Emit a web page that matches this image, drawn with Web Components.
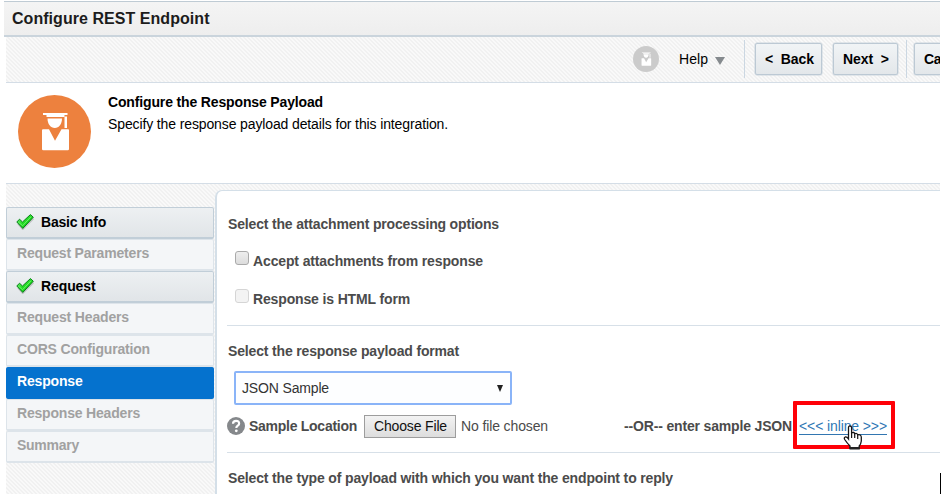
<!DOCTYPE html>
<html lang="en"><head><meta charset="utf-8"><title>Configure REST Endpoint</title>
<style>
body{margin:0;background:#fff;width:942px;height:496px;overflow:hidden;font:14px "Liberation Sans",Arial,sans-serif;color:#000}
</style></head><body>
<endpoint-wizard></endpoint-wizard>
<script>
const define=(name,html,init)=>customElements.define(name,class extends HTMLElement{
  connectedCallback(){
    if(this.shadowRoot)return;
    const t=document.createElement('template');t.innerHTML=html;
    this.attachShadow({mode:'open'}).append(t.content.cloneNode(true));
    if(init)init.call(this,this.shadowRoot);
  }
});
// A single line of text tracked out to the width given in its "w" attribute.
define('fit-text',`<style>:host{display:inline-block;flex:none;white-space:pre;line-height:16px}span{display:inline-block}</style><span><slot></slot></span>`,function(r){
  const s=r.querySelector('span'),w=+this.getAttribute('w');
  this.style.width=w+'px';
  s.style.letterSpacing=(w-s.getBoundingClientRect().width)/this.textContent.length+'px';
});
define('graduate-icon',`<style>:host{display:block;flex:none;width:73px;height:73px}svg{display:block;width:100%;height:100%}</style>
<svg viewBox="0 0 73 73"><circle cx="36.5" cy="36.5" r="36.5" fill="var(--disc,#ed813e)"/><g fill="#fff"><path d="M25 18H49.5V20H46.5V22H28.5V20H25Z"/><path d="M29.5 23.5H44C44 29 41 33 36.8 33S29.5 29 29.5 23.5Z"/><path d="M46.5 21.5H49V33H46.5Z"/><path d="M25 34.3H31L37 45.8 43.5 34.3H50.2Q51 34.3 51 35.3V54Q51 55.3 49.8 55.3H25.3Q24 55.3 24 54V35.3Q24 34.3 25 34.3Z"/></g></svg>`);
define('check-icon',`<style>:host{display:block;width:18px;height:16px}svg{display:block}</style>
<svg width="18" height="16" viewBox="0 0 18 16"><defs><linearGradient id="g" x2="1" y2="1"><stop stop-color="#7df57d"/><stop offset=".5" stop-color="#22dd22"/><stop offset="1" stop-color="#10c010"/></linearGradient></defs><path d="M2 9.8 6.7 15.4 17.5 4.6" fill="none" stroke="#999" opacity=".5" stroke-width="1.5"/><path d="M.8 8 3.5 5.2 6.5 8 14.4 .6 17.3 3.2 6.8 14.4Z" fill="url(#g)" stroke="#087d19" stroke-width="1" stroke-linejoin="round"/><path d="M2.3 8 6.6 11.7 15.2 2.6" fill="none" stroke="#7bf47b" stroke-width=".8"/></svg>`);
define('tool-button',`<style>:host{display:flex;box-sizing:border-box;height:32px;border:1px solid #bcc9d4;border-radius:2px;background:linear-gradient(#f1f4f6,#e3e7ea);box-shadow:0 0 0 .5px #cbd5de;align-items:center;padding-left:9px;font-weight:bold;flex:none}</style><slot></slot>`);
define('nav-step',`<style>:host{display:flex;box-sizing:border-box;height:32px;width:208px;border:1px solid #dde4ea;border-width:1px 1px 2px;border-radius:2px;background:#f4f6f8;color:#a1a1a1;font-weight:bold;padding:5px 0 0 10px}
:host([done]){background:linear-gradient(#edf0f2,#e1e5e8);border-color:#c1ced8;color:#000;padding-top:6px;padding-left:9px}
:host([current]){background:#0572ce;border-color:#0572ce;color:#fff}
check-icon{display:none;margin-right:7px}:host([done]) check-icon{display:block}</style><check-icon></check-icon><slot></slot>`);
define('check-option',`<style>:host{display:flex;height:18px;font-weight:bold;color:#4b4b4b}i{box-sizing:border-box;width:14px;height:14px;border:1px solid #aaa;border-radius:3px;background:linear-gradient(#eee,#dcdcdc);margin-right:4px}:host([disabled]) i{border-color:#d5d5d5;background:#f3f3f3}slot{display:block;padding-top:2px}</style><i></i><slot></slot>`);
define('hand-cursor',`<style>:host{display:block;width:20px;height:26px}</style><svg width="20" height="26" viewBox="0 0 20 26"><path d="M5.5 2.5Q5.5 1 7 1T8.6 2.5V8Q11 6.6 11.7 8.8 13.7 7.7 14.7 9.8 17.8 9 18.3 12V16Q18 19 16.2 21V23H7V21Q4 18 1.7 14.5 .7 12.7 2.3 12 3.9 11.7 5.5 14Z" fill="#fff" stroke="#151515" stroke-width="1.3"/><path d="M8.6 8V13M11.7 9V13M14.7 10V14" stroke="#151515" stroke-width="1.2"/><path d="M6.5 22H16.8V24.5H6.5Z" fill="#222"/></svg>`);
define('wizard-title',`<style>:host{display:block;box-sizing:border-box;height:36px;margin:1px 1px 0 4px;border-top:1px solid #bfcbd4;border-bottom:2px solid #cad4dc;background:linear-gradient(#f4f4f4,#eee);font-size:16px;font-weight:bold;color:#1c1c1c;padding:7px 0 0 8px}fit-text{line-height:20px}</style><fit-text w="197.5">Configure REST Endpoint</fit-text>`);
define('wizard-toolbar',`<style>:host{display:flex;box-sizing:border-box;height:46px;padding:6px 0 0 627px;align-items:flex-start;border-bottom:1px solid #d4dde6;overflow:hidden}
graduate-icon{width:26px;height:26px;margin:3px 20px 0 0;--disc:#cbcbcb}.help{margin-top:8px}.tri{flex:none;border:5.5px solid transparent;border-top:8px solid #858a8e;border-bottom:0;margin:14px 19px 0 7px}.sep{flex:none;width:1px;height:38px;background:#cbd7e2;margin-top:-3px}</style>
<graduate-icon></graduate-icon><fit-text class="help" w="29">Help</fit-text><span class="tri"></span><span class="sep"></span>
<tool-button style="width:67px;margin-left:10px"><fit-text w="49">&lt;  Back</fit-text></tool-button><tool-button style="width:65px;margin-left:11px"><fit-text w="46">Next  &gt;</fit-text></tool-button><span class="sep" style="margin-left:8px"></span><tool-button style="width:40px;margin-left:7px"><fit-text w="17">Ca</fit-text></tool-button>`);
define('wizard-banner',`<style>:host{display:flex;box-sizing:border-box;height:101px;background:#fff;border-bottom:1px solid #d4dde6;padding:12px 0 0 12px}div{display:grid;align-content:start;gap:6px;margin:-1px 0 0 17px}b{display:block;height:16px}</style><graduate-icon></graduate-icon><div><b><fit-text w="215">Configure the Response Payload</fit-text></b><fit-text w="340">Specify the response payload details for this integration.</fit-text></div>`);
define('step-list',`<style>:host{display:block;width:208px;padding-top:23px;flex:none}</style>
<nav-step done><fit-text w="65">Basic Info</fit-text></nav-step><nav-step><fit-text w="132">Request Parameters</fit-text></nav-step><nav-step done><fit-text w="54.5">Request</fit-text></nav-step><nav-step><fit-text w="112">Request Headers</fit-text></nav-step><nav-step><fit-text w="133">CORS Configuration</fit-text></nav-step><nav-step current><fit-text w="65.5">Response</fit-text></nav-step><nav-step><fit-text w="123">Response Headers</fit-text></nav-step><nav-step><fit-text w="62">Summary</fit-text></nav-step>`);
define('payload-panel',`<style>:host{display:block;box-sizing:border-box;flex:1;height:320px;margin-top:6px;border:1px solid #d4dfe8;border-right:0;border-width:1px 0 0 2px;border-radius:7px 0 0 0;background:#fff;color:#4b4b4b;padding:25px 0 0 11px;font-weight:bold;overflow:hidden}
fit-text{display:block}check-option{margin-left:7px}hr{border:0;height:1px;background:#d7e0e8;margin:0 0 0 -1px}
.select{display:flex;box-sizing:border-box;width:278px;height:34px;border:2px solid #8ab4f8;border-radius:2px;margin:12px 0 0 6px;padding:7px 7px 0 6px;background:#fdfeff;justify-content:space-between;font-weight:normal;color:#333}.tri{border:3.5px solid transparent;border-top:7px solid #222;border-bottom:0;margin-top:5px}
.row{display:flex;height:24px;margin:9px 0 0 -1px;align-items:center}.q{width:18px;height:18px;margin:-1px 4px 0 0}.file{box-sizing:border-box;height:23px;width:92px;border:1px solid #9d9d9d;background:linear-gradient(#f3f3f3,#ddd);color:#111;font-weight:normal;margin:0 5px 0 7px;padding:2px 0 0 9px}.n{font-weight:normal}.or{margin-left:76px}
.link{position:relative;font-weight:normal;color:#2f78b5;margin:1px 0 0 7px}.link fit-text{height:16px;border-bottom:1px solid #3276b1;line-height:17px}.mark{position:absolute;left:-6px;top:-17px;box-sizing:border-box;width:102px;height:48px;border:4px solid #ff0007;border-radius:1px}hand-cursor{position:absolute;left:44px;top:7px}</style>
<fit-text w="271">Select the attachment processing options</fit-text>
<check-option style="margin-top:19px"><fit-text w="230">Accept attachments from response</fit-text></check-option>
<check-option disabled style="margin-top:20px"><fit-text w="157">Response is HTML form</fit-text></check-option>
<hr style="margin-top:18px"><fit-text style="margin-top:17px" w="231">Select the response payload format</fit-text>
<div class="select"><fit-text w="87">JSON Sample</fit-text><span class="tri"></span></div>
<div class="row"><svg class="q" viewBox="0 0 18 18"><circle cx="9" cy="9" r="9" fill="#85888b"/><path d="M6 6.8Q6 3.8 9.1 3.8T12.1 6.7C12.1 8.7 9.3 8.8 9.3 11" fill="none" stroke="#fff" stroke-width="2.2"/><circle cx="9.3" cy="13.8" r="1.4" fill="#fff"/></svg><fit-text w="108">Sample Location</fit-text><span class="file"><fit-text w="73">Choose File</fit-text></span><fit-text class="n" w="87">No file chosen</fit-text><fit-text class="or" w="168">--OR-- enter sample JSON</fit-text><div class="link"><fit-text w="88">&lt;&lt;&lt; inline &gt;&gt;&gt;</fit-text><span class="mark"></span><hand-cursor></hand-cursor></div></div>
<hr style="margin-top:14px"><fit-text style="margin-top:17px" w="445">Select the type of payload with which you want the endpoint to reply</fit-text>`);
define('endpoint-wizard',`<style>:host{display:block;position:relative;width:941px;height:494px;overflow:hidden}
.page{margin:0 1px 0 6px;height:457px;overflow:hidden;background:repeating-linear-gradient(45deg,#f9f9f9 0 1.414px,#f1f1f1 1.414px 2.828px)}.content{display:flex;gap:1px;height:310px}.caret{position:absolute;right:0;bottom:0;width:1px;height:21px;background:#000}</style>
<wizard-title></wizard-title><div class="page"><wizard-toolbar></wizard-toolbar><wizard-banner></wizard-banner><div class="content"><step-list></step-list><payload-panel></payload-panel></div></div><span class="caret"></span>`);
</script></body></html>
